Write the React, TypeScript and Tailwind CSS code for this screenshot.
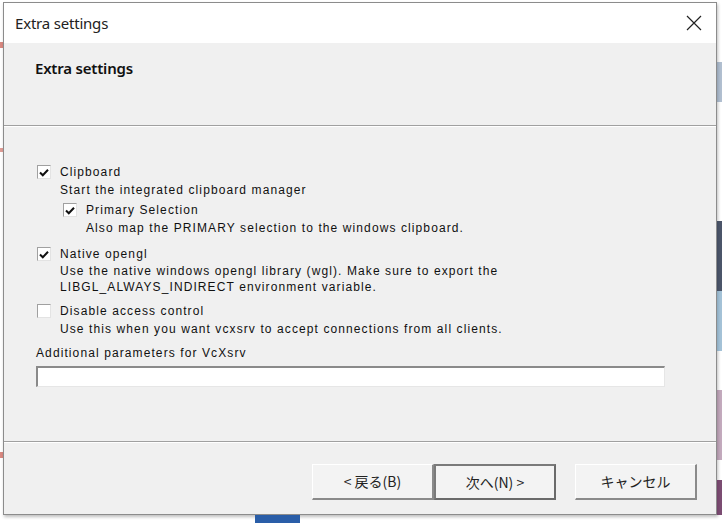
import React from "react";

const ui = { fontFamily: '"Noto Sans", "Liberation Sans", sans-serif' };
const body = { fontFamily: '"Liberation Sans", Arial, sans-serif' };
const jp = { fontFamily: '"Noto Sans CJK JP", "Noto Sans", sans-serif' };

function Check({ checked }: { checked: boolean }) {
  return (
    <span className="w-[14px] h-[14px] shrink-0 bg-white border-t border-l border-t-[#a0a0a0] border-l-[#a0a0a0] border-b border-r border-b-[#e3e3e3] border-r-[#e3e3e3] flex items-center justify-center">
      {checked && (
        <svg width="10" height="9" viewBox="0 0 10 9">
          <path d="M1 4.5 L3.8 7.3 L9 1.8" fill="none" stroke="#111" strokeWidth="2" />
        </svg>
      )}
    </span>
  );
}

function Line({ children, h = "h-[18px]", className = "" }: { children: React.ReactNode; h?: string; className?: string }) {
  return (
    <div className={`${h} flex items-center text-[12px] tracking-[1.1px] text-[#111] whitespace-nowrap ${className}`} style={body}>
      {children}
    </div>
  );
}

function Button({ label, primary }: { label: string; primary?: boolean }) {
  return (
    <button
      className={`w-[122px] h-[36px] bg-[#f3f3f3] text-[14px] text-[#222] flex items-center justify-center ${
        primary
          ? "border-2 border-[#6a6a6a] border-t-[#7a7a7a] border-l-[#7a7a7a]"
          : "border-t border-l border-t-white border-l-white border-b-2 border-r-2 border-b-[#8a8a8a] border-r-[#8a8a8a]"
      }`}
      style={jp}
    >
      {label}
    </button>
  );
}

export default function App() {
  return (
    <div className="w-[722px] h-[523px] bg-white overflow-hidden flex flex-col">
      <div className="flex h-[515px] pt-[2px]">
        {/* background peeking on the left */}
        <div className="w-[3px] flex flex-col">
          <div className="h-[40px]" />
          <div className="h-[6px] bg-[#c0392b]/60" />
          <div className="h-[100px]" />
          <div className="h-[4px] bg-[#c0392b]/50" />
          <div className="h-[300px]" />
          <div className="h-[6px] bg-[#c0392b]/60" />
        </div>

        {/* dialog window */}
        <div className="w-[714px] h-[513px] border border-[#8c8c8c] bg-[#f0f0f0] flex flex-col shadow-[1px_2px_3px_rgba(0,0,0,0.25)]">
          {/* title bar */}
          <div className="h-[40px] bg-white flex items-center justify-between pl-[11px] pr-[14px]" style={ui}>
            <span className="text-[15px] text-[#222] tracking-[-0.2px]">Extra settings</span>
            <svg width="16" height="16" viewBox="0 0 16 16">
              <path d="M1 1 L15 15 M15 1 L1 15" stroke="#222" strokeWidth="1.2" />
            </svg>
          </div>

          {/* header */}
          <div className="h-[82px] pl-[31px] pt-[13px]" style={ui}>
            <span className="text-[15px] font-semibold text-[#111] tracking-[-0.2px]">Extra settings</span>
          </div>
          <div className="h-px bg-[#a0a0a0]" />
          <div className="h-px bg-white" />

          {/* body */}
          <div className="flex-1 pl-[33px] pt-[36px]">
            <Line className="gap-[9px]">
              <Check checked />
              <span>Clipboard</span>
            </Line>
            <Line className="pl-[23px]">Start the integrated clipboard manager</Line>
            <Line className="pl-[26px] gap-[9px] mt-[2px]">
              <Check checked />
              <span>Primary Selection</span>
            </Line>
            <Line className="pl-[49px]">Also map the PRIMARY selection to the windows clipboard.</Line>

            <Line className="gap-[9px] mt-[8px]">
              <Check checked />
              <span>Native opengl</span>
            </Line>
            <Line h="h-[16px]" className="pl-[23px]">
              Use the native windows opengl library (wgl). Make sure to export the
            </Line>
            <Line h="h-[16px]" className="pl-[23px]">
              LIBGL_ALWAYS_INDIRECT environment variable.
            </Line>

            <Line className="gap-[9px] mt-[7px]">
              <Check checked={false} />
              <span>Disable access control</span>
            </Line>
            <Line className="pl-[23px]">Use this when you want vcxsrv to accept connections from all clients.</Line>

            <Line className="mt-[6px] -ml-[1px]">Additional parameters for VcXsrv</Line>
            <div className="mt-[4px] -ml-[1px] w-[629px] h-[21px] bg-white border-t-2 border-l-2 border-t-[#8a8a8a] border-l-[#8a8a8a] border-b border-r border-b-[#e6e6e6] border-r-[#e6e6e6]" />
          </div>

          <div className="h-px bg-[#a0a0a0]" />
          <div className="h-px bg-white" />

          {/* footer buttons */}
          <div className="h-[71px] flex items-start pt-[21px] pl-[308px]">
            <Button label="< 戻る(B)" />
            <Button label="次へ(N) >" primary />
            <div className="w-[19px]" />
            <Button label="キャンセル" />
          </div>
        </div>

        {/* background peeking on the right */}
        <div className="flex-1 flex flex-col">
          <div className="h-[60px]" />
          <div className="h-[40px] bg-[#3b5f8a]/40" />
          <div className="h-[120px]" />
          <div className="h-[70px] bg-[#1e2a44]/80" />
          <div className="h-[60px] bg-[#4a86b0]/50" />
          <div className="h-[40px]" />
          <div className="h-[70px] bg-[#6a2a5a]/40" />
          <div className="h-[20px]" />
          <div className="h-[35px] bg-[#5a1f4f]/80" />
        </div>
      </div>
      <div className="flex">
        <div className="w-[255px]" />
        <div className="w-[45px] h-[8px] bg-[#2a5ea8]" />
      </div>
    </div>
  );
}
